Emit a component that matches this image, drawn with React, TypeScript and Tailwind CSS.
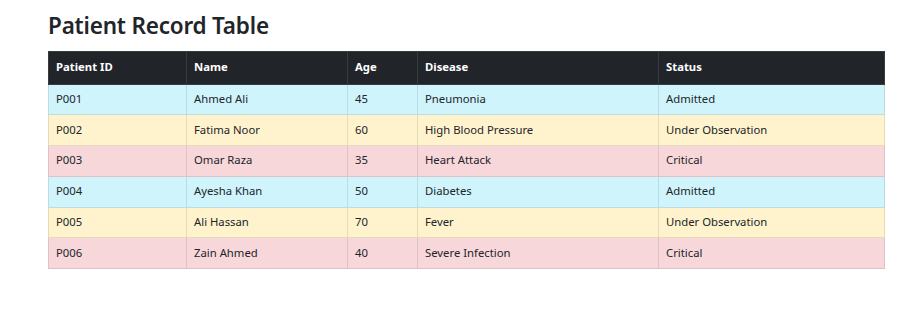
const patients = [
  { id: 'P001', name: 'Ahmed Ali', age: 45, disease: 'Pneumonia', status: 'Admitted', tone: 'info' },
  { id: 'P002', name: 'Fatima Noor', age: 60, disease: 'High Blood Pressure', status: 'Under Observation', tone: 'warning' },
  { id: 'P003', name: 'Omar Raza', age: 35, disease: 'Heart Attack', status: 'Critical', tone: 'danger' },
  { id: 'P004', name: 'Ayesha Khan', age: 50, disease: 'Diabetes', status: 'Admitted', tone: 'info' },
  { id: 'P005', name: 'Ali Hassan', age: 70, disease: 'Fever', status: 'Under Observation', tone: 'warning' },
  { id: 'P006', name: 'Zain Ahmed', age: 40, disease: 'Severe Infection', status: 'Critical', tone: 'danger' },
];

const toneClass: Record<string, string> = {
  info: 'bg-[#cff4fc] border-[#badce3]',
  warning: 'bg-[#fff3cd] border-[#e6dbb9]',
  danger: 'bg-[#f8d7da] border-[#dfc2c4]',
};

const App = () => {
  return (
    <div className="min-h-screen bg-white font-['Noto_Sans',sans-serif] text-[#212529] px-[48px] pt-[10px]">
      <h1 className="text-[22.5px] font-semibold leading-[32px] mb-[9px] tracking-[-0.2px]">Patient Record Table</h1>

      <table className="w-[836px] table-fixed border-collapse text-[11.3px]">
        <colgroup>
          <col className="w-[138px]" />
          <col className="w-[161px]" />
          <col className="w-[70px]" />
          <col className="w-[241px]" />
          <col className="w-[226px]" />
        </colgroup>
        <thead>
          <tr className="bg-[#212529] text-white h-[32.5px]">
            {['Patient ID', 'Name', 'Age', 'Disease', 'Status'].map((h) => (
              <th key={h} className="border border-[#373b3e] px-[7px] text-left font-bold">
                {h}
              </th>
            ))}
          </tr>
        </thead>
        <tbody>
          {patients.map((p) => (
            <tr key={p.id} className={`h-[30.75px] ${toneClass[p.tone]}`}>
              <td className={`border px-[7px] ${toneClass[p.tone]}`}>{p.id}</td>
              <td className={`border px-[7px] ${toneClass[p.tone]}`}>{p.name}</td>
              <td className={`border px-[7px] ${toneClass[p.tone]}`}>{p.age}</td>
              <td className={`border px-[7px] ${toneClass[p.tone]}`}>{p.disease}</td>
              <td className={`border px-[7px] ${toneClass[p.tone]}`}>{p.status}</td>
            </tr>
          ))}
        </tbody>
      </table>
    </div>
  );
};

export default App;
